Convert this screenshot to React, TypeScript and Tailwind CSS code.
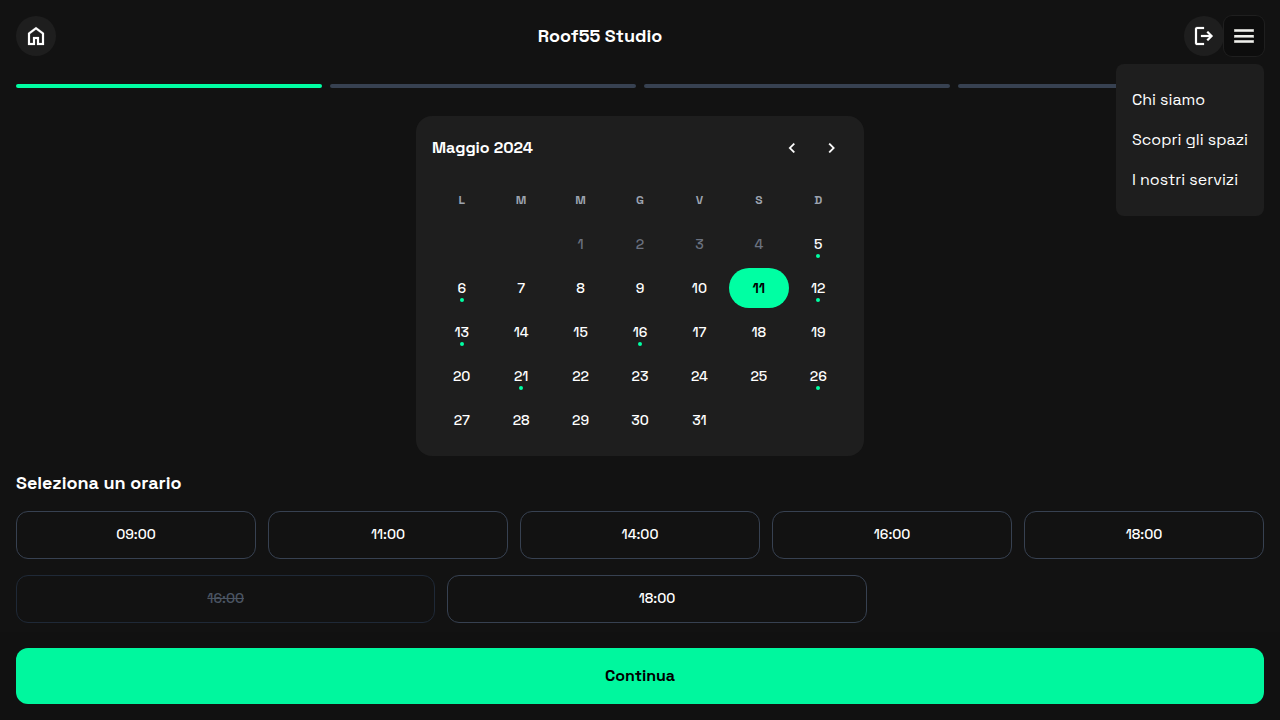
import { useState } from "react";

const paths = {
  home: "M240-200h120v-240h240v240h120v-360L480-740 240-560v360Zm-80 80v-480l320-240 320 240v480H520v-240h-80v240H160Z",
  logout:
    "M200-120q-33 0-56.5-23.5T120-200v-560q0-33 23.5-56.5T200-840h280v80H200v560h280v80H200Zm440-160-55-58 102-102H360v-80h327L585-622l55-58 200 200-200 200Z",
  left: "M560-240 320-480l240-240 56 56-184 184 184 184-56 56Z",
  right: "M504-480 320-664l56-56 240 240-240 240-56-56 184-184Z",
};

function Icon({ name, className }: { name: keyof typeof paths; className: string }) {
  return (
    <svg
      viewBox="0 -960 960 960"
      fill="currentColor"
      stroke="currentColor"
      strokeWidth="8"
      aria-hidden="true"
      className={className}
    >
      <path d={paths[name]} />
    </svg>
  );
}

const weekdays = ["L", "M", "M", "G", "V", "S", "D"];
const marked = [5, 6, 12, 13, 16, 21, 26];
const weeks = Array.from({ length: 5 }, (_, w) =>
  Array.from({ length: 7 }, (_, d) => {
    const n = w * 7 + d - 1;
    return n >= 1 && n <= 31 ? n : null;
  }),
);

function Day({ day, selected, onSelect }: { day: number; selected: boolean; onSelect: () => void }) {
  const past = day < 5;
  const tone = selected
    ? "bg-[#00ffa3] font-bold text-black"
    : past
      ? "font-medium text-[#6b7280]"
      : "font-medium text-white";
  return (
    <button
      type="button"
      disabled={past}
      onClick={onSelect}
      className={`relative flex h-10 w-full items-center justify-center rounded-full text-sm ${tone}`}
    >
      {day}
      {marked.includes(day) && (
        <span className="absolute bottom-1.5 left-1/2 size-1 -translate-x-1/2 rounded-full bg-[#00ffa3]" />
      )}
    </button>
  );
}

function Slot({ time, disabled = false }: { time: string; disabled?: boolean }) {
  return (
    <button
      type="button"
      disabled={disabled}
      className={`flex h-12 flex-1 items-center justify-center rounded-xl border px-4 text-sm leading-[21px] font-medium ${
        disabled ? "border-[#1f2937] text-[#4b5563] line-through" : "border-[#374151] text-white"
      }`}
    >
      {time}
    </button>
  );
}

export default function App() {
  const [selected, setSelected] = useState(11);
  const [menuOpen, setMenuOpen] = useState(true);

  return (
    <div className="relative flex min-h-screen flex-col bg-[#121212] font-['Space_Grotesk',Inter,sans-serif] text-white">
      <header className="flex items-center p-4">
        <button type="button" aria-label="Home" className="flex size-10 items-center justify-center rounded-full bg-[#1e1e1e]">
          <Icon name="home" className="size-6" />
        </button>
        <h1 className="flex-1 text-center text-lg font-bold">Roof55 Studio</h1>
        <div className="flex w-[120px] justify-end">
          <button type="button" aria-label="Esci" className="flex size-10 items-center justify-center rounded-full bg-[#1e1e1e]">
            <Icon name="logout" className="size-6" />
          </button>
          <button
            type="button"
            aria-label="Menu"
            aria-expanded={menuOpen}
            onClick={() => setMenuOpen(!menuOpen)}
            className="flex size-10 items-center justify-center rounded-lg bg-[#0d0d0d] ring-1 ring-[#1f1f1f]"
          >
            <svg viewBox="0 0 24 24" className="size-6" aria-hidden="true">
              <path fill="#8f8f8c" d="M2 5h20v3H2zM2 11h20v3H2zM2 16h20v3H2z" />
              <path fill="#f0f0ec" d="M2.5 5.5h19v2h-19zM2.5 11h19v2h-19zM2.5 16.5h19v2h-19z" />
            </svg>
          </button>
        </div>
      </header>

      {menuOpen && (
        <nav className="absolute top-16 right-4 z-10 rounded-lg bg-[#1e1e1e] p-4 text-base whitespace-nowrap">
          <a href="#chi-siamo" className="block py-2">Chi siamo</a>
          <a href="#spazi" className="block py-2">Scopri gli spazi</a>
          <a href="#servizi" className="block py-2">I nostri servizi</a>
        </nav>
      )}

      <div className="flex gap-2 px-4 pt-3" role="progressbar" aria-label="Avanzamento" aria-valuemin={0} aria-valuemax={4} aria-valuenow={1}>
        <div className="h-1 flex-1 rounded-full bg-[#00ffa3]" />
        <div className="h-1 flex-1 rounded-full bg-[#374151]" />
        <div className="h-1 flex-1 rounded-full bg-[#374151]" />
        <div className="h-1 flex-1 rounded-full bg-[#374151]" />
      </div>

      <main className="flex-1 px-4 pt-7">
        <section className="mx-auto max-w-md rounded-2xl bg-[#1e1e1e] p-4">
          <div className="mb-4 flex items-center justify-between">
            <h2 className="text-base font-bold">Maggio 2024</h2>
            <div className="flex gap-2">
              <button type="button" aria-label="Mese precedente" className="flex size-8 items-center justify-center">
                <Icon name="left" className="size-5" />
              </button>
              <button type="button" aria-label="Mese successivo" className="flex size-8 items-center justify-center">
                <Icon name="right" className="size-5" />
              </button>
            </div>
          </div>
          <div className="flex flex-col gap-1">
            <div className="grid h-10 grid-cols-7 items-center text-center text-xs font-bold text-[#9ca3af]">
              {weekdays.map((d, i) => (
                <span key={i}>{d}</span>
              ))}
            </div>
            {weeks.map((week, w) => (
              <div key={w} className="grid grid-cols-7">
                {week.map((day, d) =>
                  day === null ? (
                    <span key={d} />
                  ) : (
                    <Day key={d} day={day} selected={day === selected} onSelect={() => setSelected(day)} />
                  ),
                )}
              </div>
            ))}
          </div>
        </section>

        <h2 className="py-4 text-lg leading-tight font-bold">Seleziona un orario</h2>
        <div className="flex flex-col gap-4">
          <div className="flex gap-3">
            {["09:00", "11:00", "14:00", "16:00", "18:00"].map((t) => (
              <Slot key={t} time={t} />
            ))}
          </div>
          <div className="flex gap-3">
            <Slot time="16:00" disabled />
            <Slot time="18:00" />
            <div className="flex-1" />
          </div>
        </div>
      </main>

      <footer className="sticky bottom-0 bg-[#111111] p-4">
        <button type="button" className="h-14 w-full rounded-xl bg-[#00f79e] text-base font-bold text-black">
          Continua
        </button>
      </footer>
    </div>
  );
}
